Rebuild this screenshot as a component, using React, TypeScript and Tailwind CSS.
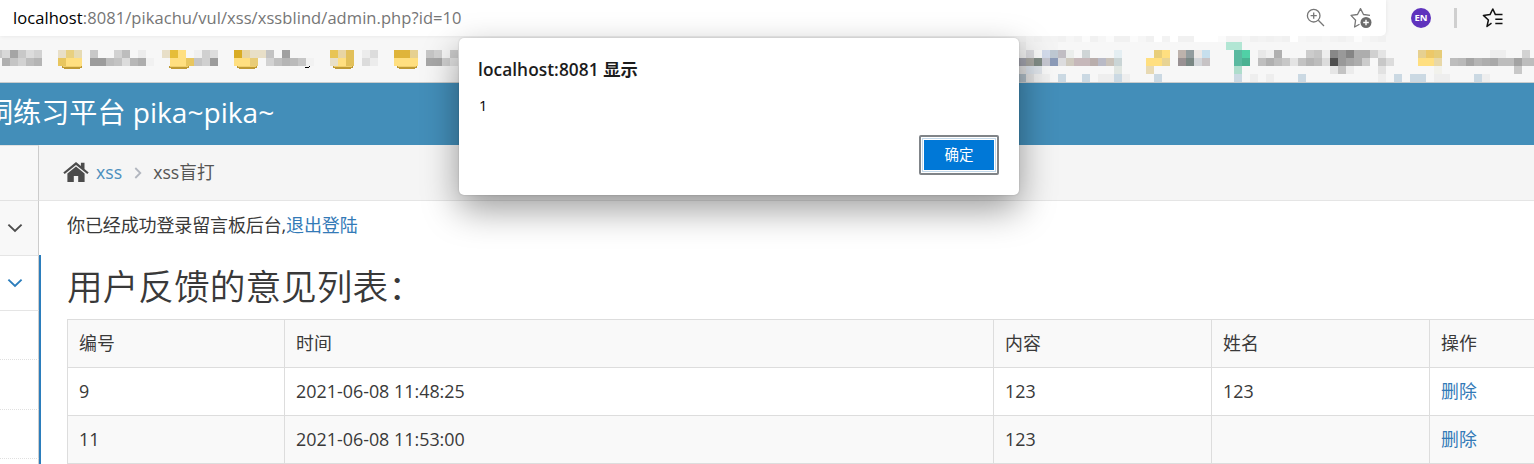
import React from 'react';

type Run = [row: number, start: number, colors: string];

const ROW_Y = [0, 6, 14, 22, 30, 38];
const ROW_H = [6, 8, 8, 8, 8, 8];

// Each run is a row, a first column and the colours of consecutive 8px blocks ("-" leaves a gap).
const RUNS: Run[] = [
  [2, -1, 'c8c8c8 d8d8d8 a5a5a5 c8c8c8 dcdcdc d2d2d2'],
  [3, 0, 'b0b0b0 c5c5c5 d2d2d2 bdbdbd b5b5b5'],
  [2, 7, 'e8dfc8 e8d080 e6dbb4'],
  [3, 7, 'e8c65f ffdf80 ffdf80'],
  [2, 11, 'c8c8c8 - - d2d2d2 bdbdbd - ececec'],
  [3, 11, '9c9c9c 9c9c9c bdbdbd c3c3c3 dcdcdc b7b7b7 adadad f1f1f1'],
  [2, 20, 'e8dfc8 e6bd38 ffdf80 - f0f0f0 d0d0d0 dddddd'],
  [3, 21, 'ffdf80 ffdf80 e8c65f c5c5c5 d0d0d0 9c9c9c'],
  [2, 29, 'd9ac24 e8d5a3 e8dfc8 e8dfc8 c3c3c3 - a0a0a0'],
  [3, 29, 'ffdf80 ffdf80 e8cc78 - d2d2d2 c0c0c0 b5b5b5 bbbbbb c7c7c7 f2f2f2'],
  [2, 41, 'e8c454 e8d5a3 e2c05a - ececec dcdcdc'],
  [3, 41, 'e8dfc8 ffdf80 e2c05a - dcdcdc ececec'],
  [2, 49, 'dfb43a dfb43a e6d090 - c6c6c6 d2d2d2 - cccccc'],
  [3, 49, 'ffdf80 ffdf80 ffdf80 - a7a7a7 a7a7a7 d0d0d0 e2e2e2'],
  [0, 127, 'f0f0f0 f3f3f3 f1f1f1 f3f3f3 f3f3f3 f1f1f1 f6f6f6 f3f3f3 fbfbfb f1f1f1 f6f6f6 fbfbfb f1f1f1 f1f1f1 fbfbfb f6f6f6 f1f1f1 ffffff f3f3f3 ffffff f1f1f1 f1f1f1 ffffff ffffff ffffff fbfbfb f3f3f3 f3f3f3 f6f6f6 f1f1f1 f3f3f3 f1f1f1 f3f3f3 f1f1f1 ffffff f6f6f6 f4f4f4 f4f4f4 f6f6f6 f3f3f3 f1f1f1 f4f4f4 fcfcfc f6f6f6 f3f3f3 f1f1f1'],
  [1, 127, 'ececec f4f4f4 f4f4f4 f4f4f4 f4f4f4'],
  [1, 153, 'b2e6d4 b2e6d4'],
  [2, 127, 'eeeeee dadade - d2daea bec8d2 c0bdc3 ebeeec - cfd5d6 - - - e4eef2 - - - - e8ce7a ffdf80 - bdb2ac 929c9e ece8e6 c6dfed - - - 5ab9a0 50d0a6 - e8e8e8 f0f0f0 b0b0b0 - - - cccccc c5c5c5 eeeeee 888888 999999 858585 adadad adadad d0d0d0 e4e4e4 - - - - e6d090 ecc868 e6cc78 - - - - - - eeeeee eeeeee - - d2d2d2'],
  [3, 127, 'a0a1ab a8a7a2 818c86 c5c6d0 8c9bb8 dcdcde cfcabf c6b8ba c6b8ba b9aeac b9bac6 c9c2ba cad5d6 - - - ffdf80 ffdf80 e8d495 - 999193 7a8784 d3d6da c7c3c5 - - - 5ab9a0 4ab292 - bfbfbf b0b0b0 bdbdbd c8c8c8 e4e4e4 c3c3c3 b5b5b5 bdbdbd dcdcdc 505050 999999 a5a5a5 adadad cccccc f8f8f8 c8c8c8 dcdcdc - - - ffdf80 ffdf80 e8d8a8 - bdbdbd b9b9b9 a5a5a5 b5b5b5 aeaeae a9a9a9 bdbdbd bdbdbd a3a3a3 bdbdbd bdbdbd'],
  [4, 127, 'e0e0e0 dbe2ea dfe4ea - - - - - - - - - e0e6e2 - - - e8dab4 - - - - - - - - - - aeddcc - - - - - - - - - - - e6e6e6 c3c3c3 ececec - - - e2e2e2 - - - - - - f2f2ec - - - - - - - - - c8c8c8'],
  [5, 127, 'b0bec8 e2e2e2 eeeeee f0f0f0 - cbd9e3 - - cbd9e3 - eeeeee eeeeee cbd9e3 eeeeee - - - cbd9e3 - - - - - - - - - cbd9e3 - eeeeee - eeeeee - - - cbd9e3 - - - - - - - - - eeeeee - cbd9e3 - cbd9e3 cbd9e3 - eeeeee eeeeee - - - cbd9e3 eeeeee'],
];

const FOLDERS = [62, 169, 237, 333, 397];

function Bookmarks() {
  return (
    <svg width="1534" height="46" viewBox="0 0 1534 46" shapeRendering="crispEdges" className="block shrink-0">
      {RUNS.map(([row, start, colors], r) =>
        colors.split(' ').map((c, i) =>
          c === '-' ? null : (
            <rect key={`${r}-${i}`} x={2 + 8 * (start + i)} y={ROW_Y[row]} width="8" height={ROW_H[row]} fill={`#${c}`} />
          ),
        ),
      )}
      {FOLDERS.map((x) => (
        <g key={x}>
          <rect x={x} y="30" width="20" height="2" fill="#bf9a35" />
          <rect x={x + 1} y="30" width="18" height="1" fill="#f0cf6c" />
          <rect x={x + 2} y="32" width="16" height="1" fill="#bf9a35" />
        </g>
      ))}
      <path d="M305 31h4v1h-4zM309 30h1v1h-1z" fill="#000" />
    </svg>
  );
}

function BrowserBar() {
  return (
    <div className="flex h-9 items-stretch bg-[#f7f7f7]">
      <div className="flex w-[1386px] items-center rounded-br-[5px] bg-white pl-[13px] shadow-[0_0_4px_rgba(0,0,0,0.08)]">
        <span className="w-[1293px] whitespace-nowrap text-[16.5px] leading-9 tracking-[0.07px] text-[#767676]">
          <span className="text-black">localhost</span>:8081/pikachu/vul/xss/xssblind/admin.php?id=10
        </span>
        <svg width="20" height="20" viewBox="0 0 20 20" fill="none" stroke="#767676" strokeWidth="1.3">
          <circle cx="7.7" cy="7.7" r="6.3" />
          <path d="M12.3 12.3 18 18M7.7 4.6v6.2M4.6 7.7h6.2" />
        </svg>
        <svg width="22" height="22" viewBox="0 0 22 22" fill="none" className="ml-[24px]">
          <path d="M9.5 17.2 4.6 20 5.6 13.2 1 8.4 7.5 7.5 10.5 1.6 13.5 7.5 20 8.4" stroke="#767676" strokeWidth="1.3" strokeLinejoin="round" />
          <circle cx="16" cy="15.5" r="5.5" fill="#6b6b6b" />
          <path d="M16 12.7v5.6M13.2 15.5h5.6" stroke="#fff" strokeWidth="1.4" />
        </svg>
      </div>
      <div className="flex items-center pl-[25px]">
        <span className="flex size-5 items-center justify-center rounded-full bg-[#5f33bd] text-[9.5px] font-bold text-white">EN</span>
        <span className="ml-[23px] h-5 w-[3px] bg-[#cfcfcf]" />
        <svg width="22" height="22" viewBox="0 0 22 22" fill="none" stroke="#111" strokeWidth="1.5" strokeLinejoin="round" className="ml-[25px]">
          <path d="M9.5 16.2 5 19.5 6.4 13 1.4 8.4 8 7.6 10.8 2 13.4 7.6H20.5M13.3 12.3h7.2M13.3 16.6h7.2" />
        </svg>
      </div>
    </div>
  );
}

function Chevron({ color }: { color: string }) {
  return (
    <svg width="16" height="10" viewBox="0 0 16 10" fill="none" stroke={color} strokeWidth="1.9" className="-mt-px ml-[6.5px] block">
      <path d="M1.4 1.6 8 8 14.6 1.6" />
    </svg>
  );
}

function Sidebar() {
  return (
    <aside className="flex h-[319px] w-[41px] shrink-0 flex-col">
      <div className="h-14 w-[39px] border-y border-r border-[#e2e2e2] border-r-[#ccc] bg-[#f8f8f8]" />
      <div className="flex h-[55px] w-[39px] items-center border-r border-b border-[#e2e2e2] border-r-[#ccc] bg-[#f8f8f8]">
        <Chevron color="#4d4d4d" />
      </div>
      <div className="-mt-px flex h-[209px] w-[41px] flex-col border-r-2 border-[#2b7dbc]">
        <div className="flex h-14 w-[39px] items-center border-y border-r border-[#e5e5e5] border-r-[#ccc] bg-white">
          <Chevron color="#2b7dbc" />
        </div>
        <div className="h-[49px] w-[39px] border-r border-b border-r-[#ccc] border-b-[#e0e0e0] bg-white [border-bottom-style:dotted]" />
        <div className="h-[50px] w-[39px] border-r border-b border-r-[#ccc] border-b-[#e0e0e0] bg-white [border-bottom-style:dotted]" />
        <div className="h-[49px] w-[39px] border-r border-b border-r-[#ccc] border-b-[#e0e0e0] bg-white [border-bottom-style:dotted]" />
        <div className="h-[5px] w-[39px] border-r border-r-[#ccc] bg-white" />
      </div>
    </aside>
  );
}

const COLS = 'grid grid-cols-[217px_709px_218px_218px_218px]';

const ROWS = [
  ['编号', '时间', '内容', '姓名', '操作'],
  ['9', '2021-06-08 11:48:25', '123', '123', '删除'],
  ['11', '2021-06-08 11:53:00', '123', '', '删除'],
];

function FeedbackTable() {
  return (
    <div className="w-[1580px] border-t border-l border-[#ddd]">
      {ROWS.map((row, r) => (
        <div key={r} className={`${COLS} ${r % 2 === 0 ? 'bg-[#f9f9f9]' : 'bg-white'}`}>
          {row.map((cell, c) => (
            <div
              key={c}
              className={`h-12 border-r border-b border-[#ddd] pl-[11px] text-[17.9px] leading-[46px] whitespace-nowrap ${
                r > 0 && c === 4 ? 'text-[#337ab7]' : 'text-[#393939]'
              }`}
            >
              {cell}
            </div>
          ))}
        </div>
      ))}
    </div>
  );
}

function AlertDialog() {
  return (
    <div className="absolute top-[38px] left-[459px] flex h-[157px] w-[560px] flex-col rounded-[5px] bg-white px-5 shadow-[0_0_2px_rgba(0,0,0,0.2),0_14px_36px_rgba(0,0,0,0.4)]">
      <div className="mt-5 -ml-px h-6 text-[17.3px] leading-6 font-semibold tracking-[0.06px] whitespace-nowrap text-[#1c1c1c]">localhost:8081 显示</div>
      <div className="mt-[14px] h-5 text-[14.5px] leading-5 text-black">1</div>
      <button className="mt-[19px] flex h-10 w-20 shrink-0 items-center justify-center self-end rounded-[2px] border-2 border-[#808488] bg-white p-[1px]">
        <span className="flex h-full w-full items-center justify-center border border-[#c3d9eb] bg-white p-px">
          <span className="flex h-[30px] w-[70px] shrink-0 items-center justify-center bg-[#0078d7] text-[14.5px] text-white">确定</span>
        </span>
      </button>
    </div>
  );
}

export default function App() {
  return (
    <div className="relative h-[464px] w-[1534px] overflow-hidden bg-white font-['Open_Sans','Noto_Sans_CJK_SC',sans-serif]">
      <BrowserBar />
      <div className="h-[47px] border-b border-[#c9cccd] bg-[#f7f7f7]">
        <Bookmarks />
      </div>
      <header className="h-[62px] bg-[#438eb9]">
        <h1 className="-ml-[15px] text-[28.1px] leading-[58px] whitespace-nowrap text-white">洞练习平台 pika~pika~</h1>
      </header>
      <div className="flex">
        <Sidebar />
        <main className="-ml-[2px] w-[1495px] shrink-0">
          <nav className="flex h-14 items-center border-b border-[#e5e5e5] bg-[#f5f5f5] pl-6 text-[17.7px]">
            <svg width="26" height="20" viewBox="0 0 26 20" fill="#4c4c4c" className="-mt-px">
              <path d="M13 0 .3 10.4l1.4 1.7L13 3l11.3 9.1 1.4-1.7-4.2-3.5V.8h-3.6v3.1Z" />
              <path d="M13 4.6 4.4 11.5V20h6.4v-6h4.4v6h6.4v-8.5Z" />
            </svg>
            <span className="-mt-px ml-[7px] text-[#4c8fbd]">xss</span>
            <svg width="8" height="12" viewBox="0 0 8 12" fill="none" stroke="#b2b6bf" strokeWidth="1.8" className="mt-px ml-[12px]">
              <path d="M1.3 1 6.3 6 1.3 11" />
            </svg>
            <span className="-mt-px ml-[11px] text-[#555]">xss盲打</span>
          </nav>
          <div className="pl-7">
            <p className="h-[50px] text-[18px] leading-[49px] tracking-[-0.12px] text-[#393939]">
              你已经成功登录留言板后台,<a className="text-[#337ab7]">退出登陆</a>
            </p>
            <h2 className="h-[68px] text-[35.7px] leading-[70px] font-[350] whitespace-nowrap text-[#393939]">用户反馈的意见列表：</h2>
            <FeedbackTable />
          </div>
        </main>
      </div>
      <AlertDialog />
    </div>
  );
}
